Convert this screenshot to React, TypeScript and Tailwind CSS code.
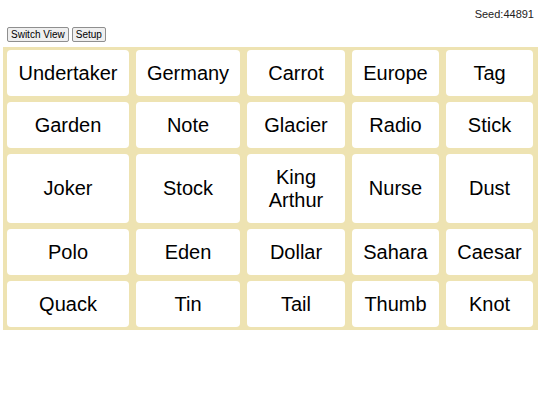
import React from 'react';

const WORDS: string[] = [
  'Undertaker', 'Germany', 'Carrot', 'Europe', 'Tag',
  'Garden', 'Note', 'Glacier', 'Radio', 'Stick',
  'Joker', 'Stock', 'King Arthur', 'Nurse', 'Dust',
  'Polo', 'Eden', 'Dollar', 'Sahara', 'Caesar',
  'Quack', 'Tin', 'Tail', 'Thumb', 'Knot',
];

const App: React.FC = () => {
  return (
    <div className="min-h-screen bg-white text-black font-['Liberation_Sans',Arial,sans-serif]">
      {/* seed */}
      <div className="flex justify-end pr-[6px] pt-[8px] text-[11px] leading-[13px] text-[#222]">Seed:44891</div>

      {/* controls */}
      <div className="flex gap-[3px] pl-[7px] mt-[6px]">
        <button className="border border-[#8f8f8f] bg-[#efefef] rounded-[2px] px-[3px] text-[10px] leading-[13px]">Switch View</button>
        <button className="border border-[#8f8f8f] bg-[#efefef] rounded-[2px] px-[3px] text-[10px] leading-[13px]">Setup</button>
      </div>

      {/* board */}
      <div className="ml-[3px] mt-[5px] w-[535px] bg-[#eee3b2] pt-[3px] pb-[3px] pl-[4px] pr-[5px] grid grid-cols-[122px_104px_98px_87px_87px] gap-x-[7px] gap-y-[6px]">
        {WORDS.map((w) => (
          <div
            key={w}
            className="bg-white rounded-[4px] flex items-center justify-center text-center text-[20px] leading-[23px] py-[11.5px] px-[2px]"
          >
            {w}
          </div>
        ))}
      </div>
    </div>
  );
};

export default App;
